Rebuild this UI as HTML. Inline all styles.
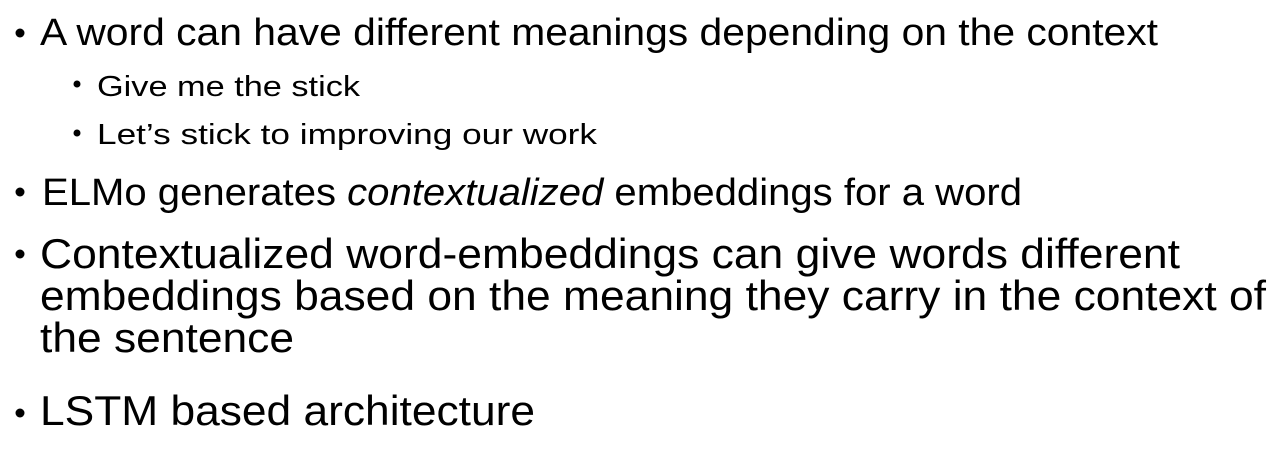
<!DOCTYPE html>
<html><head><style>html,body{margin:0;padding:0;background:#fff;width:1274px;height:466px;overflow:hidden}</style></head>
<body>
<svg width="1274" height="466" xmlns="http://www.w3.org/2000/svg" font-family="Liberation Sans, sans-serif" fill="#000">
<circle cx="20" cy="33" r="4.5"/>
<text x="40" y="45" font-size="38" textLength="1118" lengthAdjust="spacingAndGlyphs">A word can have different meanings depending on the context</text>
<circle cx="77" cy="84" r="3.5"/>
<text x="97" y="96" font-size="29" textLength="263" lengthAdjust="spacingAndGlyphs">Give me the stick</text>
<circle cx="77" cy="133" r="3.5"/>
<text x="97" y="144" font-size="29" textLength="500" lengthAdjust="spacingAndGlyphs">Let’s stick to improving our work</text>
<circle cx="20" cy="192" r="4.5"/>
<text x="42" y="205" font-size="38" textLength="980" lengthAdjust="spacingAndGlyphs">ELMo generates <tspan font-style="italic">contextualized</tspan> embeddings for a word</text>
<circle cx="20" cy="254" r="4.5"/>
<text x="40" y="268" font-size="42" textLength="1140" lengthAdjust="spacingAndGlyphs">Contextualized word-embeddings can give words different</text>
<text x="40" y="310" font-size="42" textLength="1226" lengthAdjust="spacingAndGlyphs">embeddings based on the meaning they carry in the context of</text>
<text x="40" y="352" font-size="42" textLength="254" lengthAdjust="spacingAndGlyphs">the sentence</text>
<circle cx="20" cy="413" r="4.5"/>
<text x="40" y="425" font-size="42" textLength="495" lengthAdjust="spacingAndGlyphs">LSTM based architecture</text>
</svg>
</body></html>
